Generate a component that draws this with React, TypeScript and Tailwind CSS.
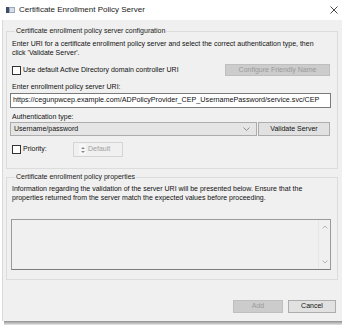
import React from 'react';

const font = { fontFamily: '"Liberation Sans", Arial, sans-serif' };

const Checkbox: React.FC = () => (
  <span className="inline-block w-[9px] h-[9px] border border-[#333333] bg-white shrink-0" />
);

const App: React.FC = () => {
  return (
    <div className="w-[342px] h-[325px] bg-white flex flex-col text-[7px] text-[#111111]" style={font}>
      {/* Title bar */}
      <div className="h-[20px] flex items-center bg-white shrink-0">
        <svg className="ml-[6px]" width="9" height="6" viewBox="0 0 9 6">
          <rect x="0" y="0" width="9" height="6" fill="#9aa7b8" />
          <rect x="0" y="0" width="3" height="6" fill="#3d4e66" />
          <rect x="4" y="1" width="4" height="4" fill="#d7dde6" />
        </svg>
        <span className="ml-[4px] text-[8px] text-[#1a1a1a]">Certificate Enrollment Policy Server</span>
        <svg className="ml-auto mr-[4px]" width="8" height="8" viewBox="0 0 8 8">
          <path d="M0.5 0.5 L7.5 7.5 M7.5 0.5 L0.5 7.5" stroke="#333333" strokeWidth="0.9" />
        </svg>
      </div>

      {/* Body */}
      <div className="ml-[2px] h-[301px] bg-[#f0f0f0] border-l border-[#d9d9d9] flex flex-col pl-[3px] pr-[4px] shrink-0">
        <fieldset className="mt-[6px] border border-[#dcdcdc] pl-[5px] pr-[6px] pb-[11px]">
          <legend className="ml-[3px] px-[1px] leading-[10px] text-[#1a1a1a]">
            Certificate enrollment policy server configuration
          </legend>
          <p className="mt-[3px] leading-[9px] max-w-[310px]">
            Enter URI for a certificate enrollment policy server and select the correct authentication type, then click 'Validate Server'.
          </p>
          <div className="mt-[7px] flex items-center h-[12px]">
            <Checkbox />
            <span className="ml-[2px]">Use default Active Directory domain controller URI</span>
            <div className="ml-auto mr-[1px] w-[105px] h-[12px] bg-[#cccccc] border border-[#bfbfbf] flex items-center justify-center text-[#9a9a9a]">
              Configure Friendly Name
            </div>
          </div>
          <div className="mt-[6px] leading-[10px]">Enter enrollment policy server URI:</div>
          <div className="mt-[1px] -ml-[2px] h-[15px] bg-white border border-[#7a7a7a] flex items-center pl-[2px] whitespace-nowrap overflow-hidden text-[7.2px]">
            https://cegunpwcep.example.com/ADPolicyProvider_CEP_UsernamePassword/service.svc/CEP
          </div>
          <div className="mt-[4px] leading-[10px]">Authentication type:</div>
          <div className="flex items-center h-[14px]">
            <div className="-ml-[2px] w-[247px] h-[14px] bg-[#e5e5e5] border border-[#acacac] flex items-center pl-[3px] pr-[6px]">
              <span>Username/password</span>
              <svg className="ml-auto" width="7" height="4" viewBox="0 0 7 4">
                <path d="M0.5 0.5 L3.5 3.5 L6.5 0.5" fill="none" stroke="#7a7a7a" strokeWidth="0.8" />
              </svg>
            </div>
            <div className="ml-auto mr-[1px] w-[72px] h-[14px] bg-[#e1e1e1] border border-[#adadad] flex items-center justify-center">
              Validate Server
            </div>
          </div>
          <div className="mt-[6px] flex items-center h-[15px]">
            <Checkbox />
            <span className="ml-[2px] w-[50px]">Priority:</span>
            <div className="w-[50px] h-[15px] border border-[#d4d4d4] bg-[#f0f0f0] flex items-center">
              <div className="ml-[5px] w-[7px] h-[11px] bg-[#f7f7f7] flex flex-col items-center justify-center gap-[2px]">
                <svg width="4" height="2" viewBox="0 0 4 2"><path d="M0 2 L2 0 L4 2 Z" fill="#8a8a8a" /></svg>
                <svg width="4" height="2" viewBox="0 0 4 2"><path d="M0 0 L2 2 L4 0 Z" fill="#8a8a8a" /></svg>
              </div>
              <span className="ml-[2px] text-[#a0a0a0]">Default</span>
            </div>
          </div>
        </fieldset>

        <fieldset className="mt-[3px] border border-[#dcdcdc] pl-[5px] pr-[6px] pb-[9px]">
          <legend className="ml-[3px] px-[1px] leading-[10px] text-[#1a1a1a]">
            Certificate enrollment policy properties
          </legend>
          <p className="mt-[2px] leading-[9px] max-w-[310px]">
            Information regarding the validation of the server URI will be presented below. Ensure that the properties returned from the server match the expected values before proceeding.
          </p>
          <div className="mt-[17px] -ml-[1px] h-[51px] bg-[#f0f0f0] border border-[#9a9a9a] border-b-[#7d7d7d] flex">
            <div className="ml-auto w-[12px] border-l border-[#e6e6e6] flex flex-col items-center justify-between py-[5px]">
              <svg width="6" height="4" viewBox="0 0 6 4"><path d="M0.5 3.5 L3 1 L5.5 3.5" fill="none" stroke="#a6a6a6" strokeWidth="0.8" /></svg>
              <svg width="6" height="4" viewBox="0 0 6 4"><path d="M0.5 0.5 L3 3 L5.5 0.5" fill="none" stroke="#a6a6a6" strokeWidth="0.8" /></svg>
            </div>
          </div>
        </fieldset>

        <div className="mt-[20px] flex justify-end gap-[5px] pr-[2px]">
          <div className="w-[50px] h-[13px] bg-[#cccccc] border border-[#bfbfbf] flex items-center justify-center text-[#9a9a9a]">
            Add
          </div>
          <div className="w-[48px] h-[13px] bg-[#e1e1e1] border border-[#adadad] flex items-center justify-center">
            Cancel
          </div>
        </div>
      </div>
      <div className="ml-[4px] h-[4px] bg-gradient-to-b from-[#8f8f8f] to-[#e8e8e8]" />
    </div>
  );
};

export default App;
